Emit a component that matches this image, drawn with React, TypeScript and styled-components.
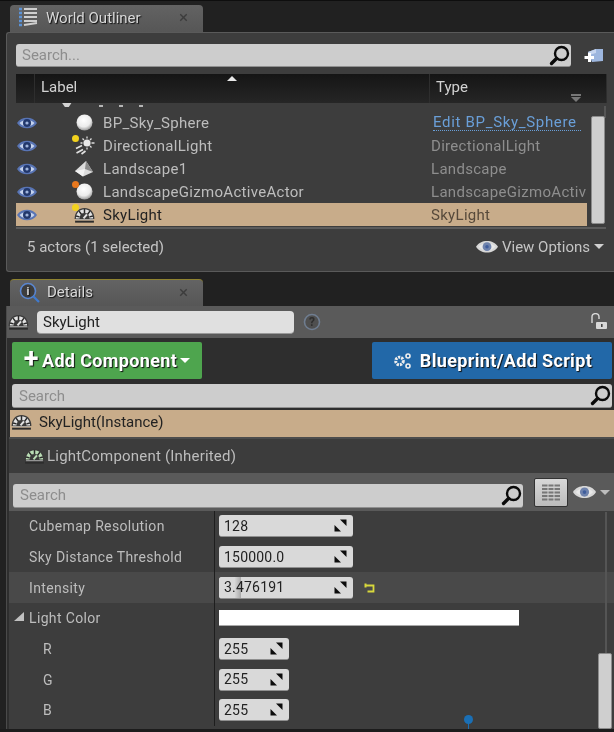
import React from "react";
import styled, { createGlobalStyle } from "styled-components";

const Global = createGlobalStyle`
  html, body { margin: 0; padding: 0; background: #1f1f1f; }
  * { box-sizing: border-box; }
`;

const Page = styled.div`
  position: relative;
  width: 614px;
  height: 732px;
  overflow: hidden;
  background: #212121;
  font-family: Roboto, "Liberation Sans", sans-serif;
  font-size: 15px;
  color: #c8c8c8;
  padding-top: 4px;
  border-top: 1px solid #0e0e0e;
  filter: blur(0.35px);
  display: flex;
  flex-direction: column;
`;

const TabStrip = styled.div`
  height: 27px;
  padding-left: 10px;
  display: flex;
  flex: none;
`;
const Tab = styled.div<{ $active?: boolean }>`
  width: 193px;
  height: 100%;
  border-radius: 4px 4px 0 0;
  background: linear-gradient(#636363, #565656);
  ${(p) => p.$active && "border-top: 1px solid #8f8330;"}
  display: flex;
  align-items: center;
  padding: 0 15px 2px 9px;
  color: #d8d8d8;
  font-size: 15px;
  text-shadow: 1px 1px 1px #111;
`;
const TabLabel = styled.span<{ $gap: number }>`
  flex: 1;
  margin-left: ${(p) => p.$gap}px;
`;
const TabClose = styled.span`
  color: #3c3c3c;
  font-size: 17px;
  line-height: 1;
  text-shadow: none;
`;

const Panel = styled.div`
  position: relative;
  flex: none;
  margin-left: 6px;
  height: 240px;
  background: #3d3d3d;
  border: 1px solid #5a5a5a;
  border-right: none;
  border-radius: 3px 0 0 3px;
  padding: 11px 0 0 9px;
`;
const OutlinerSearchRow = styled.div`
  display: flex;
  align-items: center;
  gap: 11px;
`;
const SearchBox = styled.div<{ $w: number; $h?: number; $pl?: number }>`
  width: ${(p) => p.$w}px;
  height: ${(p) => p.$h ?? 23}px;
  background: #cdcdcd;
  border-radius: 3px;
  border-bottom: 1px solid #8f8f8f;
  display: flex;
  align-items: center;
  justify-content: space-between;
  padding: 0 1px 0 ${(p) => p.$pl ?? 6}px;
  color: #8d8d8d;
  font-size: 15px;
  flex: none;
`;
const Header = styled.div`
  width: 591px;
  height: 29px;
  margin-top: 7px;
  display: grid;
  grid-template-columns: 19px 395px 1fr;
  background: linear-gradient(#151515, #262626);
  color: #d2d2d2;
  position: relative;
`;
const HeaderCell = styled.div`
  border-right: 1px solid #2e2e2e;
  padding: 4px 0 0 6px;
  position: relative;
`;
const SortUp = styled.span`
  position: absolute;
  left: 192px;
  top: 2px;
  width: 0;
  height: 0;
  border-left: 5px solid transparent;
  border-right: 5px solid transparent;
  border-bottom: 5px solid #e8e8e8;
`;
const SortDown = styled.span`
  position: absolute;
  right: 25px;
  top: 20px;
  width: 10px;
  height: 6px;
  border-top: 2px solid #777;
  &::after {
    content: "";
    position: absolute;
    left: 0;
    top: 1px;
    border-left: 5px solid transparent;
    border-right: 5px solid transparent;
    border-top: 5px solid #777;
  }
`;
const CutRow = styled.div`
  height: 8px;
  overflow: hidden;
  position: relative;
  display: flex;
  gap: 16px;
  padding-left: 83px;
  align-items: flex-start;
`;
const CutMark = styled.span`
  width: 4px;
  height: 2px;
  margin-top: 2px;
  background: #b5b5b5;
`;
const CutShape = styled.span`
  position: absolute;
  left: 45px;
  top: -4px;
  width: 13px;
  height: 8px;
  background: #d4d4d4;
  clip-path: polygon(0 30%, 100% 0, 60% 100%, 30% 100%);
`;
const Row = styled.div<{ $sel?: boolean }>`
  width: 571px;
  height: 23px;
  display: grid;
  grid-template-columns: 85px 330px 1fr;
  align-items: center;
  background: ${(p) => (p.$sel ? "#c8ac8a" : "transparent")};
  color: ${(p) => (p.$sel ? "#222" : "#bdbdbd")};
`;
const RowIcons = styled.div`
  display: flex;
  align-items: center;
  justify-content: space-between;
  padding-left: 1px;
  padding-right: 5px;
`;
const RowName = styled.div`
  padding-left: 2px;
  white-space: nowrap;
  letter-spacing: 0.3px;
`;
const RowType = styled.div<{ $link?: boolean; $sel?: boolean }>`
  white-space: nowrap;
  overflow: ${(p) => (p.$link ? "visible" : "hidden")};
  letter-spacing: ${(p) => (p.$link ? "0.68px" : "0.3px")};
  width: ${(p) => (p.$link ? "148px" : "156px")};
  margin-left: ${(p) => (p.$link ? "2px" : "0")};
  color: ${(p) => (p.$link ? "#6a9fd8" : p.$sel ? "#574a3b" : "#8e8e8e")};
  ${(p) => p.$link && "border-bottom: 1px dotted #6a9fd8; line-height: 15px;"}
`;
const FooterLine = styled.div`
  width: 590px;
  height: 2px;
  margin-top: 1px;
  background: #5c5c5c;
`;
const Footer = styled.div`
  width: 590px;
  height: 35px;
  display: flex;
  align-items: center;
  justify-content: space-between;
  padding: 0 2px 0 11px;
  color: #c4c4c4;
  font-size: 15px;
`;
const ViewOptions = styled.div`
  display: flex;
  align-items: center;
  gap: 4px;
`;
const Caret = styled.span<{ $c?: string }>`
  display: inline-block;
  width: 0;
  height: 0;
  border-left: 5px solid transparent;
  border-right: 5px solid transparent;
  border-top: 5px solid ${(p) => p.$c ?? "#d0d0d0"};
`;
const ScrollTrack = styled.span<{ $x: number; $top: number; $h: number }>`
  position: absolute;
  left: ${(p) => p.$x}px;
  top: ${(p) => p.$top}px;
  height: ${(p) => p.$h}px;
  width: 2px;
  background: #555;
`;
const ScrollThumb = styled.span<{ $x: number; $top: number; $h: number }>`
  position: absolute;
  left: ${(p) => p.$x}px;
  top: ${(p) => p.$top}px;
  height: ${(p) => p.$h}px;
  width: 14px;
  background: #cfcfcf;
  border: 1px solid #8c8c8c;
  border-radius: 2px;
`;

const Gap = styled.div<{ $h: number }>`
  height: ${(p) => p.$h}px;
  flex: none;
`;

const DetailsPanel = styled.div`
  flex: 1;
  position: relative;
  margin-left: 6px;
  border-left: 1px solid #4a4a4a;
  background: #2e2e2e;
  display: flex;
  flex-direction: column;
  min-height: 0;
`;
const NameBar = styled.div`
  height: 32px;
  flex: none;
  background: #5a5a5a;
  display: flex;
  align-items: center;
  padding: 0 6px 0 1px;
`;
const NameInput = styled.div`
  width: 257px;
  height: 23px;
  margin-left: 8px;
  background: #e0e0e0;
  border-radius: 4px;
  border-bottom: 1px solid #9a9a9a;
  color: #222;
  padding-left: 6px;
  display: flex;
  align-items: center;
  margin-right: 9px;
`;
const Spacer = styled.div`
  flex: 1;
`;
const ButtonRow = styled.div`
  display: flex;
  justify-content: space-between;
  padding: 4px 2px 0 5px;
  flex: none;
`;
const ActionButton = styled.div<{ $w: number; $bg: string; $gap: number }>`
  width: ${(p) => p.$w}px;
  height: 37px;
  background: ${(p) => p.$bg};
  border-radius: 2px;
  color: #fff;
  font-size: 18px;
  font-weight: 700;
  letter-spacing: 0.35px;
  text-shadow: 1px 1px 1px #111;
  display: flex;
  align-items: center;
  justify-content: center;
  gap: ${(p) => p.$gap}px;
`;
const Plus = styled.span`
  font-size: 27px;
  line-height: 1;
  margin-top: -2px;
`;
const DetailsSearch = styled.div`
  padding: 5px 1px 0 5px;
  flex: none;
`;
const SelRow = styled.div`
  margin-top: 2px;
  flex: none;
  height: 27px;
  margin-left: 3px;
  background: #c8ac8a;
  color: #222;
  display: flex;
  align-items: center;
  gap: 7px;
  padding: 0 0 3px 1px;
`;
const InheritRow = styled.div`
  flex: none;
  margin-left: 2px;
  height: 36px;
  border-top: 2px solid #4d4d4d;
  background: #3c3c3c;
  display: flex;
  align-items: center;
  padding: 0 0 1px 15px;
  gap: 2px;
  color: #bdbdbd;
  letter-spacing: 0.2px;
`;
const FilterBar = styled.div`
  flex: none;
  height: 38px;
  background: #5a5a5a;
  margin-left: 2px;
  display: flex;
  align-items: center;
  padding: 7px 0 0 4px;
`;
const GridBtn = styled.div`
  width: 34px;
  height: 29px;
  margin-left: 11px;
  margin-top: -7px;
  background: linear-gradient(#d8d8d8, #bcbcbc);
  border: 1px solid #333;
  border-radius: 2px;
  display: flex;
  align-items: center;
  justify-content: center;
`;
const EyeBtn = styled.div`
  display: flex;
  align-items: center;
  gap: 4px;
  margin-left: 5px;
  margin-top: -6px;
`;
const PropList = styled.div`
  flex: 1;
  min-height: 0;
  margin-left: 2px;
  background: #3d3d3d;
  overflow: hidden;
`;
const PropRow = styled.div<{ $hi?: boolean }>`
  height: 30.7px;
  display: grid;
  grid-template-columns: 206px 1fr;
  background: ${(p) => (p.$hi ? "#494949" : "transparent")};
`;
const PropName = styled.div<{ $indent?: number }>`
  border-right: 1px solid #1e1e1e;
  display: flex;
  align-items: center;
  padding-left: ${(p) => p.$indent ?? 20}px;
  font-size: 14px;
  letter-spacing: 0.35px;
  color: #bdbdbd;
  position: relative;
`;
const PropValue = styled.div`
  display: flex;
  align-items: center;
  padding-left: 4px;
  gap: 11px;
`;
const NumBox = styled.div<{ $w: number }>`
  position: relative;
  width: ${(p) => p.$w}px;
  height: 22px;
  background: #d9d9d9;
  border-radius: 3px;
  border-bottom: 1px solid #8f8f8f;
  display: flex;
  align-items: center;
  justify-content: space-between;
  padding: 0 6px 0 5px;
  color: #222;
  font-size: 14px;
  letter-spacing: 0.2px;
  overflow: hidden;
`;
const SliderFill = styled.span`
  position: absolute;
  left: 0;
  top: 0;
  bottom: 0;
  width: 22px;
  background: linear-gradient(90deg, #d9d9d9 70%, #a9a9a9);
`;
const NumText = styled.span`
  position: relative;
`;
const ExpandTri = styled.span`
  position: absolute;
  left: 5px;
  top: 9px;
  width: 0;
  height: 0;
  border-left: 10px solid transparent;
  border-bottom: 9px solid #c0c0c0;
`;
const ColorSwatch = styled.div`
  width: 300px;
  height: 16px;
  background: #fff;
  border-bottom: 1px solid #a8a8a8;
`;
const BlueDot = styled.span`
  position: absolute;
  left: 457px;
  top: 409px;
  width: 9px;
  height: 9px;
  border-radius: 50%;
  background: #1a6fb5;
  &::after {
    content: "";
    position: absolute;
    left: 4px;
    top: 8px;
    width: 1px;
    height: 10px;
    background: #1a6fb5;
  }
`;
const BottomStrip = styled.div`
  position: absolute;
  left: 0;
  right: 0;
  bottom: 0;
  height: 3px;
  background: #1c1c1c;
`;

const Eye = ({ w = 20, dim }: { w?: number; dim?: boolean }) => (
  <svg width={w} height={w * 0.7} viewBox="0 0 20 14">
    <path d="M0 7C4 0 16 0 20 7C16 14 4 14 0 7Z" fill={dim ? "#d8d8d8" : "#5874b4"} />
    <path d="M2.5 7C6 3 14 3 17.5 7C14 11.5 6 11.5 2.5 7Z" fill={dim ? "#e8e8e8" : "#c6d4ee"} />
    <circle cx="10" cy="7" r="4" fill={dim ? "#6f83ad" : "#22386c"} />
    <circle cx="10" cy="7" r="1.6" fill={dim ? "#3f5d9c" : "#9fb4dc"} />
  </svg>
);
const Lens = () => (
  <svg width="21" height="21" viewBox="0 0 21 21">
    <circle cx="12.5" cy="8.5" r="6.5" fill="none" stroke="#0a0a0a" strokeWidth="2.4" />
    <path d="M7.5 13.5L2.5 18.5" stroke="#0a0a0a" strokeWidth="3.4" strokeLinecap="round" />
  </svg>
);
const FolderPlus = () => (
  <svg width="22" height="18" viewBox="0 0 22 18">
    <path d="M6 5L14 2H21V14L10 15Z" fill="#9db6de" />
    <path d="M6 5L14 2V6L7 8Z" fill="#c7d6ef" />
    <path d="M6 6V9H2.5V12H6V15H9V12H12V9H9V6Z" fill="#fff" />
  </svg>
);
const Gauge = ({ w = 21, tint = "#e2e2e2" }: { w?: number; tint?: string }) => (
  <svg width={w} height={w * 0.85} viewBox="0 0 21 18">
    <path d="M0.5 13C0.5 6 5 2 10.5 2S20.5 6 20.5 13Z" fill="#3a3a3a" />
    <path d="M1.8 12.5C2 7 5.5 3.2 10.5 3.2S19 7 19.2 12.5L15.6 12.5C15.4 9 13.5 7 10.5 7S5.6 9 5.4 12.5Z" fill={tint} />
    <path d="M5 5.2L7.5 8.6M10.5 3V7M16 5.2L13.5 8.6M2 10L5.5 11M19 10L15.5 11" stroke="#2a2a2a" strokeWidth="1.5" />
    <path d="M9.5 12.5L13 8.5" stroke={tint} strokeWidth="2" />
    <path d="M1 15.8H20" stroke="#2c2c2c" strokeWidth="2" />
    <path d="M2 13.8H19" stroke="#a8a8a8" strokeWidth="1" />
  </svg>
);
const IconSlot = styled.span`
  position: relative;
  width: 24px;
  height: 21px;
  display: flex;
  align-items: center;
  justify-content: center;
  flex: none;
`;
const Badge = styled.span<{ $c: string }>`
  position: absolute;
  left: 0;
  top: 0;
  width: 7px;
  height: 7px;
  border-radius: 50%;
  background: ${(p) => p.$c};
`;
const Ball = ({ id }: { id: string }) => (
  <svg width="17" height="17" viewBox="0 0 17 17">
    <defs>
      <radialGradient id={id} cx="45%" cy="35%" r="70%">
        <stop offset="0%" stopColor="#ffffff" />
        <stop offset="60%" stopColor="#ececec" />
        <stop offset="100%" stopColor="#8c8c8c" />
      </radialGradient>
    </defs>
    <circle cx="8.5" cy="8.5" r="8" fill={`url(#${id})`} />
  </svg>
);
const Sun = () => (
  <svg width="21" height="19" viewBox="0 0 21 19">
    <circle cx="13" cy="7" r="3.6" fill="#e8e8e8" />
    <path d="M13 0.5V2.5M13 11.5V13.5M6.5 7H8.5M17.5 7H20.5M8.5 2.5L10 4M17.5 2.5L16 4M17.5 11.5L16 10" stroke="#ddd" strokeWidth="1.3" />
    <path d="M2 12.5L8 9.5M2.5 17L9 13.5M7.5 18L11.5 15" stroke="#e0e0e0" strokeWidth="1.7" />
  </svg>
);
const Landscape = () => (
  <svg width="20" height="17" viewBox="0 0 20 17">
    <path d="M1 11L12 1L19 12L9 16.5Z" fill="#dcdcdc" />
    <path d="M12 1L11 9L19 12Z" fill="#8b8b8b" />
    <path d="M1 11L11 9L9 16.5Z" fill="#f2f2f2" />
  </svg>
);
const Grid = () => (
  <svg width="18" height="17" viewBox="0 0 18 17">
    <path d="M0 1.5H18M0 5H18M0 8.5H18M0 12H18M0 15.5H18" stroke="#777" strokeWidth="2" />
    <path d="M6 0V17M12 0V17" stroke="#d0d0d0" strokeWidth="1" />
  </svg>
);
const Drag = () => (
  <svg width="13" height="13" viewBox="0 0 13 13">
    <path d="M0.5 12.5V6L7 12.5Z" fill="#0c0c0c" />
    <path d="M12.5 0.5V7L6 0.5Z" fill="#0c0c0c" />
  </svg>
);
const Gears = () => (
  <svg width="20" height="18" viewBox="0 0 20 18">
    <circle cx="7.5" cy="9" r="3.8" fill="none" stroke="#eee" strokeWidth="3" strokeDasharray="2.2 1" />
    <circle cx="16" cy="4" r="2" fill="none" stroke="#eee" strokeWidth="1.6" />
    <circle cx="16" cy="14" r="2" fill="none" stroke="#eee" strokeWidth="1.6" />
  </svg>
);
const ListIcon = () => (
  <svg width="19" height="21" viewBox="0 0 19 21">
    <path d="M0 2H3M0 6H3M0 10H3M0 14H3M0 18H3" stroke="#5c93d6" strokeWidth="2.4" />
    <path d="M5 2H18M5 6H18M5 10H18M5 14H18M5 18L18 16" stroke="#cfcfcf" strokeWidth="1.8" />
  </svg>
);
const InfoIcon = () => (
  <svg width="21" height="21" viewBox="0 0 21 21">
    <circle cx="9" cy="9" r="7.5" fill="#3d3d3d" stroke="#5a86d0" strokeWidth="1.6" />
    <text x="9" y="13" fontSize="11" fontWeight="700" fill="#ddd" textAnchor="middle" fontFamily="Roboto">i</text>
    <path d="M14 14L20 20" stroke="#3f7ad0" strokeWidth="2.2" />
  </svg>
);
const HelpIcon = () => (
  <svg width="18" height="18" viewBox="0 0 18 18">
    <circle cx="9" cy="9" r="7.5" fill="#4f4f4f" stroke="#6f7d90" strokeWidth="1.6" />
    <text x="9" y="13" fontSize="12" fontWeight="700" fill="#2e2e2e" textAnchor="middle" fontFamily="Roboto">?</text>
  </svg>
);
const Lock = () => (
  <svg width="18" height="18" viewBox="0 0 18 18">
    <path d="M2 10V4C2 -0.5 9 -0.5 9 4V6" fill="none" stroke="#d8d8d8" strokeWidth="1.4" />
    <rect x="6" y="9" width="11" height="7" rx="1" fill="#d8d8d8" />
    <rect x="11" y="11" width="1.6" height="3" fill="#444" />
  </svg>
);
const Revert = () => (
  <svg width="11" height="10" viewBox="0 0 11 10">
    <path d="M1 2.5H9.5V8.5H3.5" fill="none" stroke="#d8d83c" strokeWidth="1.8" />
    <path d="M1.5 0.5V4.5" stroke="#d8d83c" strokeWidth="2" />
  </svg>
);

const rows = [
  { name: "BP_Sky_Sphere", type: "Edit BP_Sky_Sphere", link: true, icon: <Ball id="b1" /> },
  { name: "DirectionalLight", type: "DirectionalLight", icon: <Sun />, badge: "#f2d21e" },
  { name: "Landscape1", type: "Landscape", icon: <Landscape /> },
  { name: "LandscapeGizmoActiveActor", type: "LandscapeGizmoActiveActor", icon: <Ball id="b2" />, badge: "#e8781e" },
  { name: "SkyLight", type: "SkyLight", icon: <Gauge />, badge: "#f2d21e", sel: true },
];

const props = [
  { name: "Cubemap Resolution", value: "128", w: 134 },
  { name: "Sky Distance Threshold", value: "150000.0", w: 134 },
  { name: "Intensity", value: "3.476191", w: 134, hi: true },
];
const channels = ["R", "G", "B"];

export default function App() {
  return (
    <Page>
      <Global />
      <TabStrip>
        <Tab>
          <ListIcon />
          <TabLabel $gap={8}>World Outliner</TabLabel>
          <TabClose>×</TabClose>
        </Tab>
      </TabStrip>
      <Panel>
        <OutlinerSearchRow>
          <SearchBox $w={555}>
            Search...
            <Lens />
          </SearchBox>
          <FolderPlus />
        </OutlinerSearchRow>
        <Header>
          <HeaderCell />
          <HeaderCell>
            Label
            <SortUp />
          </HeaderCell>
          <HeaderCell>
            Type
            <SortDown />
          </HeaderCell>
        </Header>
        <CutRow>
          <CutShape />
          <CutMark />
          <CutMark />
          <CutMark />
        </CutRow>
        {rows.map((r) => (
          <Row key={r.name} $sel={r.sel}>
            <RowIcons>
              <Eye />
              <IconSlot>
                {r.icon}
                {r.badge && <Badge $c={r.badge} />}
              </IconSlot>
            </RowIcons>
            <RowName>{r.name}</RowName>
            <RowType $link={r.link} $sel={r.sel}>
              {r.type}
            </RowType>
          </Row>
        ))}
        <FooterLine />
        <Footer>
          <span>5 actors (1 selected)</span>
          <ViewOptions>
            <Eye w={22} dim />
            View Options
            <Caret />
          </ViewOptions>
        </Footer>
        <ScrollTrack $x={597} $top={73} $h={12} />
        <ScrollThumb $x={584} $top={83} $h={108} />
      </Panel>
      <Gap $h={7} />
      <TabStrip>
        <Tab $active>
          <InfoIcon />
          <TabLabel $gap={7}>Details</TabLabel>
          <TabClose>×</TabClose>
        </Tab>
      </TabStrip>
      <DetailsPanel>
        <NameBar>
          <Gauge />
          <NameInput>SkyLight</NameInput>
          <HelpIcon />
          <Spacer />
          <Lock />
        </NameBar>
        <ButtonRow>
          <ActionButton $w={190} $bg="#4ea54e" $gap={3}>
            <Plus>+</Plus>
            Add Component
            <Caret $c="#fff" />
          </ActionButton>
          <ActionButton $w={240} $bg="#2268a8" $gap={8}>
            <Gears />
            Blueprint/Add Script
          </ActionButton>
        </ButtonRow>
        <DetailsSearch>
          <SearchBox $w={600} $h={24} $pl={7}>
            Search
            <Lens />
          </SearchBox>
        </DetailsSearch>
        <SelRow>
          <Gauge />
          SkyLight(Instance)
        </SelRow>
        <InheritRow>
          <Gauge tint="#b9dcb4" />
          LightComponent (Inherited)
        </InheritRow>
        <FilterBar>
          <SearchBox $w={510} $h={24} $pl={7}>
            Search
            <Lens />
          </SearchBox>
          <GridBtn>
            <Grid />
          </GridBtn>
          <EyeBtn>
            <Eye w={23} dim />
            <Caret $c="#bdbdbd" />
          </EyeBtn>
        </FilterBar>
        <PropList>
          {props.map((p) => (
            <PropRow key={p.name} $hi={p.hi}>
              <PropName>{p.name}</PropName>
              <PropValue>
                <NumBox $w={p.w}>
                  {p.hi && <SliderFill />}
                  <NumText>{p.value}</NumText>
                  <Drag />
                </NumBox>
                {p.hi && <Revert />}
              </PropValue>
            </PropRow>
          ))}
          <PropRow>
            <PropName>
              <ExpandTri />
              Light Color
            </PropName>
            <PropValue>
              <ColorSwatch />
            </PropValue>
          </PropRow>
          {channels.map((c) => (
            <PropRow key={c}>
              <PropName $indent={34}>{c}</PropName>
              <PropValue>
                <NumBox $w={70}>
                  255
                  <Drag />
                </NumBox>
              </PropValue>
            </PropRow>
          ))}
        </PropList>
        <ScrollTrack $x={598} $top={206} $h={141} />
        <ScrollThumb $x={591} $top={347} $h={76} />
        <BlueDot />
      </DetailsPanel>
      <BottomStrip />
    </Page>
  );
}
